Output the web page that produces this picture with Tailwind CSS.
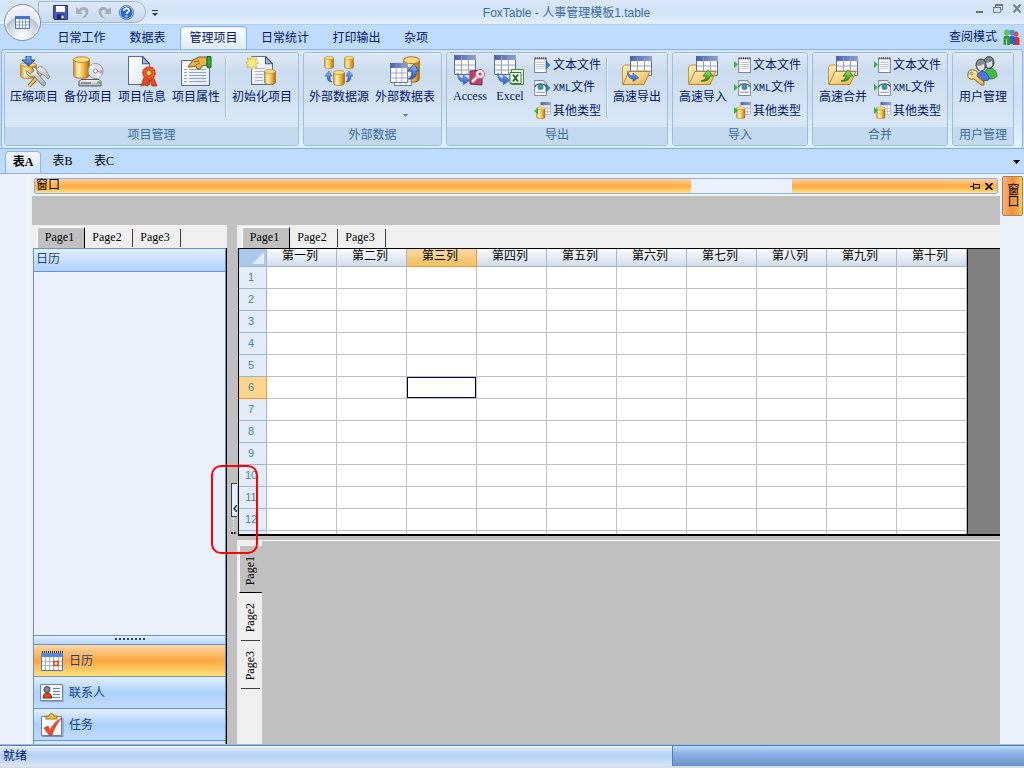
<!DOCTYPE html>
<html lang="zh-CN">
<head>
<meta charset="utf-8">
<meta name="viewport" content="width=device-width, initial-scale=1">
<title>FoxTable - 人事管理模板1.table</title>
<script src="https://cdn.jsdelivr.net/npm/@tailwindcss/browser@4"></script>
</head>
<body class="h-screen overflow-hidden flex flex-col bg-[#bfdbff] text-[12px] leading-[16px] text-[#00156e] font-['Liberation_Serif','Noto_Sans_CJK_SC',sans-serif]">

<svg width="0" height="0" class="absolute" aria-hidden="true">
  <defs>
    <linearGradient id="gold"><stop offset="0" stop-color="#d89a28"/><stop offset=".3" stop-color="#fff4c0"/><stop offset=".6" stop-color="#f4be44"/><stop offset="1" stop-color="#b06c10"/></linearGradient>
    <linearGradient id="blueArrow" x2="0" y2="1"><stop offset="0" stop-color="#8cb8f4"/><stop offset="1" stop-color="#2858c0"/></linearGradient>
    <linearGradient id="greenArrow" x2="0" y2="1"><stop offset="0" stop-color="#a0ec70"/><stop offset="1" stop-color="#209018"/></linearGradient>
    <linearGradient id="folder" x2="1" y2="1"><stop offset="0" stop-color="#fff2c4"/><stop offset="1" stop-color="#f0b040"/></linearGradient>
    <linearGradient id="page" x2="1" y2="1"><stop offset="0" stop-color="#fff"/><stop offset="1" stop-color="#dfe7f6"/></linearGradient>
    <linearGradient id="metal" x2="0" y2="1"><stop offset="0" stop-color="#fafafa"/><stop offset="1" stop-color="#a4aab4"/></linearGradient>
    <linearGradient id="head4" x2="1" y2="0"><stop offset="0" stop-color="#4a63a8"/><stop offset="1" stop-color="#8ea2d4"/></linearGradient>
    <symbol id="cyl" viewBox="0 0 12 16" preserveAspectRatio="none"><path d="M.5 2.500v11c0 1.300 2.500 2 5.500 2s5.500-.7 5.500-2v-11z" fill="url(#gold)" stroke="#a4640e" stroke-width=".6"/><ellipse cx="6" cy="2.500" rx="5.500" ry="2" fill="#fbdc84" stroke="#b87818" stroke-width=".6"/></symbol>
    <symbol id="tbl" viewBox="0 0 22 20" preserveAspectRatio="none"><path d="M.5.5h21v19H.5z" fill="#fff" stroke="#5a6c98"/><path d="M0 0h22v5H0z" fill="url(#head4)"/><path d="M1 10h20M1 15h20M7.500 1v18M14.500 1v18" stroke="#8f9fc4"/></symbol>
    <symbol id="doc" viewBox="0 0 22 28" preserveAspectRatio="none"><path d="M.5.5h14l7 7v20H.5z" fill="url(#page)" stroke="#5c6c90"/><path d="M14.500.5v7h7z" fill="#9fb4dc" stroke="#44557c"/></symbol>
    <symbol id="arrR" viewBox="0 0 14 14"><path d="M1 1c0 4 2 6 6 6V3.500L13.500 9 7 13.500V10.500C2 10.500.5 6 1 1z" fill="url(#blueArrow)" stroke="#2a56b0" stroke-width=".7"/></symbol>

    <symbol id="i-compress" viewBox="0 0 32 32">
      <svg x="2" y="6" width="17" height="17"><use href="#cyl"/></svg>
      <path d="M8 0h5v4h4l-6.500 6L4 4h4z" fill="url(#blueArrow)" stroke="#2451a8"/>
      <path d="M24 16L11 30" stroke="#8a5a10" stroke-width="4"/><path d="M24 16L11 30" stroke="#f2c458" stroke-width="2.500"/>
      <path d="M18 13l5-3 4 3 5 8-2 2-4-4-4-2z" fill="url(#metal)" stroke="#7f8690" stroke-width=".8"/>
      <path d="M8 14l4 4 4-3-2-4c4 0 6 3 5 6l8 9c2 3-1 5-3 3l-8-9c-5 2-8-2-8-6z" fill="url(#metal)" stroke="#767d88" stroke-width=".9"/>
    </symbol>
    <symbol id="i-backup" viewBox="0 0 32 32">
      <svg x="1" y="0" width="17" height="23"><use href="#cyl"/></svg>
      <circle cx="23.500" cy="15" r="7.500" fill="#dde1ea" stroke="#8b92a0"/><path d="M23.500 15l-6-4a7 7 0 0 1 4-3zM23.500 15l6 4a7 7 0 0 1-4 3z" fill="#fff"/><path d="M23.500 15l7-1v4z" fill="#b8a4e0"/><circle cx="23.500" cy="15" r="2" fill="#fff" stroke="#888"/>
      <path d="M9 23.500h18l2 2v4.500H7v-4.500z" fill="url(#metal)" stroke="#555c66"/><path d="M9 27h10" stroke="#555"/><path d="M25 25.500h3v2h-3z" fill="#40c030"/>
    </symbol>
    <symbol id="i-info" viewBox="0 0 32 32">
      <svg x="2" y="0" width="22" height="29"><use href="#doc"/></svg>
      <path d="M18 21l-3 9 4-1 3 1 2-6 2 6 5 0-4-10z" fill="#e8481c" stroke="#a82808" stroke-width=".7"/>
      <circle cx="23" cy="17" r="6.500" fill="#ee5c2c"/><circle cx="23" cy="17" r="6" fill="none" stroke="#d04018" stroke-width="1.500" stroke-dasharray="2 1"/><circle cx="23" cy="17" r="3" fill="#f8c860" stroke="#c84010"/>
    </symbol>
    <symbol id="i-prop" viewBox="0 0 32 32">
      <path d="M1.500 4.500h28v25h-28z" fill="url(#page)" stroke="#5c6c90"/>
      <path d="M4 13.500h3m2 0h17M4 16.500h3m2 0h17M4 19.500h3m2 0h17M4 22.500h3m2 0h17M4 25.500h3m2 0h17" stroke="#94a2c2"/>
      <path d="M8 11l5-7 6-3 8 0v8l-5 1-2 3h-3l-1-3-5 1z" fill="#e4b44c" stroke="#84560c"/><path d="M14 6l5-1m-3 4l4-2" stroke="#84560c" stroke-width=".8"/>
      <path d="M27 .5h4v11h-4z" fill="#30a838" stroke="#146c1c"/>
    </symbol>
    <symbol id="i-init" viewBox="0 0 32 32">
      <svg x="5" y="0" width="22" height="29"><use href="#doc"/></svg>
      <path d="M9 12.500h10M9 15.500h10M9 18.500h9M9 21.500h8M9 24.500h8" stroke="#a8b4d0"/>
      <svg x="18" y="13" width="12" height="16"><use href="#cyl"/></svg>
      <path d="M6 0l1.500 3.500L11 2l-1.500 3.500L13 7l-3.500 1.500L11 12l-3.500-1.500L6 14l-1.500-3.500L1 12l1.500-3.500L-1 7l3.500-1.500L1 2l3.500 1.500z" fill="#ffec80" stroke="#d8a820" stroke-width=".7"/>
    </symbol>
    <symbol id="i-src" viewBox="0 0 32 32">
      <svg x="1" y="0" width="10" height="13"><use href="#cyl"/></svg><svg x="21" y="0" width="10" height="13"><use href="#cyl"/></svg><svg x="10" y="14" width="12" height="16"><use href="#cyl"/></svg>
      <path d="M9 26c-4 0-5-3-5-6H2l4-5 3 5H7c0 3 0 4 2 6zM23 26c4 0 5-3 5-6h2l-4-5-3 5h2c0 3 0 4-2 6z" fill="url(#blueArrow)" stroke="#2c5cb8" stroke-width=".6"/>
    </symbol>
    <symbol id="i-ext" viewBox="0 0 32 32">
      <svg x="14" y="0" width="17" height="27"><use href="#cyl"/></svg>
      <svg x="5" y="11" width="18" height="19"><use href="#tbl"/></svg><svg x="1" y="7" width="18" height="20"><use href="#tbl"/></svg>
      <path d="M19 23c4-2 5-5 4-8h-4l6-7 5 7h-3c1 5-2 9-8 8z" fill="url(#blueArrow)" stroke="#1c4aa8" stroke-width=".8"/>
    </symbol>
    <symbol id="i-access" viewBox="0 0 32 32">
      <svg x="0" y="1" width="22" height="20"><use href="#tbl"/></svg><svg x="3" y="18" width="13" height="13"><use href="#arrR"/></svg>
      <path d="M16 17l12-1v15l-12-1z" fill="#b84870" stroke="#802448"/><circle cx="26" cy="20" r="4.500" fill="#f4e4ec" stroke="#a85070" stroke-width=".8"/><circle cx="26" cy="20" r="1.500" fill="#b84870"/><path d="M23 23l-5 5" stroke="#f4e4ec" stroke-width="2.500"/>
    </symbol>
    <symbol id="i-excel" viewBox="0 0 32 32">
      <svg x="0" y="1" width="22" height="20"><use href="#tbl"/></svg><svg x="3" y="18" width="13" height="13"><use href="#arrR"/></svg>
      <path d="M17.500 15.500h12v15h-12z" fill="#e8f6e4" stroke="#3c8c3c"/><path d="M16 18.500h11v11H16z" fill="#fff" stroke="#2c7c2c"/><path d="M19 20.500l5 7m0-7l-5 7" stroke="#187018" stroke-width="2"/>
    </symbol>
    <symbol id="fold" viewBox="0 0 32 32">
      <path d="M1.500 28V11l2-2h6l2 3h8v16z" fill="url(#folder)" stroke="#c89434"/>
      <svg x="9" y="0" width="22" height="20"><use href="#tbl"/></svg>
      <path d="M2 28.500L8 15.500h21l-6 13z" fill="url(#folder)" stroke="#c08424"/>
    </symbol>
    <symbol id="i-fout" viewBox="0 0 32 32"><use href="#fold"/><svg x="6" y="14" width="12" height="12"><use href="#arrR"/></svg></symbol>
    <symbol id="i-fin" viewBox="0 0 32 32"><use href="#fold"/><path d="M14 25c4-1 5-3 5-5h-3l5-6 5 6h-3c0 3-3 6-9 5z" fill="url(#greenArrow)" stroke="#187818" stroke-width=".8"/></symbol>
    <symbol id="i-user" viewBox="0 0 32 32">
      <path d="M17 21c0-6 3-9 6-9s7 3 7 8c0 2-5 3-7 3z" fill="#48b848" stroke="#187828" stroke-width=".7"/><ellipse cx="22" cy="6.500" rx="5" ry="6" fill="#80848a" stroke="#404448"/><path d="M18 7c3 0 5-1 7-2l0 5-4 2z" fill="#dcdee0"/>
      <path d="M10 24c0-7 3-9 5-9s7 3 7 8c0 2-6 2-7 2z" fill="#4878e0" stroke="#1c3ca0" stroke-width=".7"/><ellipse cx="14" cy="9" rx="5" ry="6" fill="#888c92" stroke="#404448"/><path d="M10 10c3 0 5-1 7-2l0 5-4 2z" fill="#e0e2e4"/>
      <path d="M4 14c5-1 8 3 6 6l7 6v3h-3l-7-6c-4 1-7-1-6-5s1-4 3-4z" fill="url(#folder)" stroke="#8c6408"/><circle cx="4.500" cy="17.500" r="1.500" fill="#9cc0ec" stroke="#8c6408" stroke-width=".5"/>
    </symbol>

    <symbol id="note" viewBox="0 0 12 16"><path d="M.5 2.500h11v13H.5z" fill="#fff" stroke="#7482a0"/><path d="M1 1v2m2-2v2m2-2v2m2-2v2m2-2v2m2-2v2" stroke="#333" stroke-width=".8"/><path d="M2 6h8M2 8h8M2 10h8M2 12h8" stroke="#c0c6d2"/></symbol>
    <symbol id="xml" viewBox="0 0 12 16"><path d="M.5 1.500h8l3 3v11H.5z" fill="#fff" stroke="#7c8cb0"/><circle cx="6" cy="7.500" r="2.800" fill="#3488c8"/><path d="M5 5l2 1-1 3z" fill="#50b850"/><path d="M.5 7.500c2-4 9-4 11 0" fill="none" stroke="#345"/><path d="M2 12.500h8" stroke="#889"/></symbol>
    <symbol id="oth" viewBox="0 0 15 16"><svg x="5" y="0" width="10" height="12"><use href="#tbl"/></svg><svg x="1" y="4" width="9" height="12"><use href="#cyl"/></svg></symbol>
    <symbol id="s-note-out" viewBox="0 0 17 17"><svg x="0" y="0" width="13" height="17"><use href="#note"/></svg><path d="M12 5v8l4-4z" fill="#3c78e0" stroke="#2050b0" stroke-width=".6"/></symbol>
    <symbol id="s-xml-out" viewBox="0 0 17 17"><svg x="0" y="0" width="13" height="17"><use href="#xml"/></svg><path d="M12 5v8l4-4z" fill="#3c78e0" stroke="#2050b0" stroke-width=".6"/></symbol>
    <symbol id="s-oth-out" viewBox="0 0 17 17"><svg x="1" y="0" width="16" height="17"><use href="#oth"/></svg><path d="M4 6v6L0 9z" fill="#30b830"/></symbol>
    <symbol id="s-note-in" viewBox="0 0 17 17"><svg x="4" y="0" width="13" height="17"><use href="#note"/></svg><path d="M0 5v7l4-3.500z" fill="#30b830"/></symbol>
    <symbol id="s-xml-in" viewBox="0 0 17 17"><svg x="4" y="0" width="13" height="17"><use href="#xml"/></svg><path d="M0 5v7l4-3.500z" fill="#30b830"/></symbol>
    <symbol id="s-oth-in" viewBox="0 0 17 17"><svg x="1" y="0" width="16" height="17"><use href="#oth"/></svg><path d="M0 5v7l4-3.500z" fill="#30b830"/></symbol>
  </defs>
</svg>

<!-- Title bar -->
<header class="relative shrink-0 h-[25px] flex items-center bg-linear-to-b from-[#d9e7f9] via-[#d3e4f9] to-[#e3effe] border-b border-[#b0cff7]">
  <div class="ml-[38px] h-[22px] w-[108px] pl-[14px] flex items-center gap-[7px] rounded-r-full border border-[#9db8dc] bg-linear-to-b from-[#dde9f8] to-[#c8daf1]">
    <button aria-label="保存"><svg width="15" height="15" viewBox="0 0 15 15"><path d="M.5.5h14v14H1.500L.5 13z" fill="#4856c0" stroke="#30388c"/><path d="M3 1h9v6H3z" fill="#fff"/><path d="M4 9.500h7v5H4z" fill="#202860"/><path d="M8.500 10.500h2v3h-2z" fill="#fff"/></svg></button>
    <button aria-label="撤销"><svg width="15" height="15" viewBox="0 0 15 15"><path d="M1 2v7h7L5.500 6.500c3-3 6-1 5 2-.4 1.500-1.500 3-4 5 5-1 7-4 7-7 0-5-6-6-9.500-2z" fill="#a4acb8"/></svg></button>
    <button aria-label="重做"><svg width="15" height="15" viewBox="0 0 15 15"><path d="M14 2v7H7l2.500-2.500c-3-3-6-1-5 2 .4 1.500 1.500 3 4 5-5-1-7-4-7-7 0-5 6-6 9.500-2z" fill="#a4acb8"/></svg></button>
    <button aria-label="帮助"><svg width="15" height="15" viewBox="0 0 15 15"><circle cx="7.500" cy="7.500" r="6.500" fill="#2868d8" stroke="#dbe8fa"/><circle cx="7.500" cy="7.500" r="7" fill="none" stroke="#2456b4" stroke-width=".8"/><path d="M5 6c0-3.500 5-3.500 5-.6C10 7 7.500 7 7.500 9" fill="none" stroke="#fff" stroke-width="1.700"/><path d="M6.600 10.300h1.800V12H6.600z" fill="#fff"/></svg></button>
  </div>
  <button aria-label="自定义快速访问工具栏" class="ml-[6px] mt-[3px]"><svg width="6" height="7" viewBox="0 0 6 7"><path d="M0 0h6v1H0zM0 3h6L3 6z" fill="#1c3c7c"/></svg></button>
  <h1 class="flex-1 pt-[2px] text-center font-['Liberation_Sans','Noto_Sans_CJK_SC',sans-serif] text-[#3e6aaa]">FoxTable - 人事管理模板1.table</h1>
  <div class="w-[47px] mb-[7px] mr-[2px] flex items-center justify-between">
    <button aria-label="最小化"><svg width="9" height="9" viewBox="0 0 9 9"><path d="M1 7h7v2H1z" fill="#70757c"/></svg></button>
    <button aria-label="还原"><svg width="10" height="9" viewBox="0 0 10 9"><path d="M2.500 3V1h7v5H8M.5 3.500h7v5h-7z" fill="none" stroke="#7484a0"/><path d="M2 0h8v2H2zM0 3h8v1H0z" fill="#70757c"/></svg></button>
    <button aria-label="关闭"><svg width="10" height="9" viewBox="0 0 10 9"><path d="M1.500.5l7 8m0-8l-7 8" stroke="#76808e" stroke-width="2"/></svg></button>
  </div>
  <button aria-label="应用程序菜单" class="absolute z-10 left-[4px] top-[4px] size-[37px] rounded-full border border-[#7d8ba4] bg-[radial-gradient(circle_at_50%_85%,#ffffff_0%,#d4dae8_35%,#bac3d6_52%,#e8ebf2_56%,#f7f8fb_100%)] flex items-center justify-center shadow-[inset_0_0_0_1px_#fff]">
    <svg width="15" height="13" viewBox="0 0 15 13"><path d="M.5.5h14v12H.5z" fill="#fff" stroke="#5070a8"/><path d="M0 0h15v3H0z" fill="#4474cc"/><path d="M1 6h13M1 9h13M4.500 3v9M7.500 3v9M10.500 3v9" stroke="#88a0cc"/></svg>
  </button>
</header>

<!-- Ribbon tabs -->
<nav class="shrink-0 h-[24px] pl-[46px] pr-[4px] flex items-end">
  <button class="w-[71px] h-[23px]">日常工作</button>
  <button class="w-[61px] h-[23px]">数据表</button>
  <button class="mx-[2px] w-[67px] h-[23px] rounded-t-[4px] border border-b-0 border-[#8db2e3] bg-linear-to-b from-white to-[#dfe9f6] shadow-[inset_0_0_0_1px_#d4f2fc]">管理项目</button>
  <button class="w-[72px] h-[23px]">日常统计</button>
  <button class="w-[71px] h-[23px]">打印输出</button>
  <button class="w-[48px] h-[23px]">杂项</button>
  <button class="ml-auto h-[24px] flex items-center gap-[6px]">查阅模式
    <svg width="17" height="17" viewBox="0 0 17 17"><circle cx="13" cy="5" r="2.500" fill="#e84840"/><path d="M10 16V9q3-3 6.500 0v7z" fill="#d83030"/><circle cx="9" cy="3.500" r="2.800" fill="#4888e8"/><path d="M6 15V8q3-3 6 0v7z" fill="#2c60d0"/><circle cx="4" cy="3.500" r="3" fill="#60c848"/><path d="M.5 16V8q3.500-3 6.500 0v8z" fill="#30a028"/><path d="M3.500 10v6" stroke="#c8f0b8"/></svg>
  </button>
</nav>

<!-- Ribbon -->
<section aria-label="管理项目" class="shrink-0 mx-[1px] px-[2px] pt-[2px] pb-[1px] flex gap-[4px] rounded-[4px] border border-[#8db2e3] border-b-[#c8f2fb] bg-linear-to-b from-[#dbe6f4] via-[#cfdff1] to-[#e0f2fd]">
  <div class="w-[295px] h-[94px] flex flex-col rounded-[3px] overflow-hidden border border-[#9dbfdc]">
    <div class="flex-1 px-[2px] flex bg-linear-to-b from-[#dde8f5] via-[#cbdcef] via-25% to-[#d9e8f7]">
      <button class="w-[54px] pt-[3px] flex flex-col items-center leading-[18px]"><svg width="32" height="32"><use href="#i-compress"/></svg>压缩项目</button>
      <button class="w-[54px] pt-[3px] flex flex-col items-center leading-[18px]"><svg width="32" height="32"><use href="#i-backup"/></svg>备份项目</button>
      <button class="w-[54px] pt-[3px] flex flex-col items-center leading-[18px]"><svg width="32" height="32"><use href="#i-info"/></svg>项目信息</button>
      <button class="w-[54px] pt-[3px] flex flex-col items-center leading-[18px]"><svg width="32" height="32"><use href="#i-prop"/></svg>项目属性</button>
      <span class="mx-[2px] mt-[5px] w-[2px] h-[59px] border-l border-[#9abee4] bg-[#eef6fd]"></span>
      <button class="w-[66px] pt-[3px] flex flex-col items-center leading-[18px]"><svg width="32" height="32"><use href="#i-init"/></svg>初始化项目</button>
    </div>
    <h2 class="h-[18px] leading-[17px] text-center text-[#3e6aaa] bg-[#c2d9f0]">项目管理</h2>
  </div>

  <div class="w-[139px] h-[94px] flex flex-col rounded-[3px] overflow-hidden border border-[#9dbfdc]">
    <div class="flex-1 px-[2px] flex bg-linear-to-b from-[#dde8f5] via-[#cbdcef] via-25% to-[#d9e8f7]">
      <button class="w-[66px] pt-[3px] flex flex-col items-center leading-[18px]"><svg width="32" height="32"><use href="#i-src"/></svg>外部数据源</button>
      <button class="w-[66px] pt-[3px] flex flex-col items-center leading-[18px]"><svg width="32" height="32"><use href="#i-ext"/></svg>外部数据表<svg class="mt-[8px]" width="5" height="3" viewBox="0 0 5 3"><path d="M0 0h5L2.500 3z" fill="#4c78b8"/></svg></button>
    </div>
    <h2 class="h-[18px] leading-[17px] text-center text-[#3e6aaa] bg-[#c2d9f0]">外部数据</h2>
  </div>

  <div class="w-[222px] h-[94px] flex flex-col rounded-[3px] overflow-hidden border border-[#9dbfdc]">
    <div class="flex-1 px-[3px] flex bg-linear-to-b from-[#dde8f5] via-[#cbdcef] via-25% to-[#d9e8f7]">
      <button class="w-[40px] pt-[1px] flex flex-col items-center leading-[20px]"><svg width="32" height="32"><use href="#i-access"/></svg>Access</button>
      <button class="w-[40px] pt-[1px] flex flex-col items-center leading-[20px]"><svg width="32" height="32"><use href="#i-excel"/></svg>Excel</button>
      <div class="pl-[4px] w-[74px]">
        <button class="h-[23px] flex items-center gap-[2px] whitespace-nowrap"><svg width="17" height="17"><use href="#s-note-out"/></svg>文本文件</button>
        <button class="h-[23px] flex items-center gap-[2px] whitespace-nowrap"><svg width="17" height="17"><use href="#s-xml-out"/></svg><span><span class="font-['Liberation_Mono',monospace] text-[10px]">XML</span>文件</span></button>
        <button class="h-[23px] flex items-center gap-[2px] whitespace-nowrap"><svg width="17" height="17"><use href="#s-oth-out"/></svg>其他类型</button>
      </div>
      <span class="mx-[2px] mt-[5px] w-[2px] h-[59px] border-l border-[#9abee4] bg-[#eef6fd]"></span>
      <button class="w-[54px] pt-[3px] flex flex-col items-center leading-[18px]"><svg width="32" height="32"><use href="#i-fout"/></svg>高速导出</button>
    </div>
    <h2 class="h-[18px] leading-[17px] text-center text-[#3e6aaa] bg-[#c2d9f0]">导出</h2>
  </div>

  <div class="w-[136px] h-[94px] flex flex-col rounded-[3px] overflow-hidden border border-[#9dbfdc]">
    <div class="flex-1 px-[3px] flex bg-linear-to-b from-[#dde8f5] via-[#cbdcef] via-25% to-[#d9e8f7]">
      <button class="w-[54px] pt-[3px] flex flex-col items-center leading-[18px]"><svg width="32" height="32"><use href="#i-fin"/></svg>高速导入</button>
      <div class="pl-[4px]">
        <button class="h-[23px] flex items-center gap-[2px] whitespace-nowrap"><svg width="17" height="17"><use href="#s-note-in"/></svg>文本文件</button>
        <button class="h-[23px] flex items-center gap-[2px] whitespace-nowrap"><svg width="17" height="17"><use href="#s-xml-in"/></svg><span><span class="font-['Liberation_Mono',monospace] text-[10px]">XML</span>文件</span></button>
        <button class="h-[23px] flex items-center gap-[2px] whitespace-nowrap"><svg width="17" height="17"><use href="#s-oth-in"/></svg>其他类型</button>
      </div>
    </div>
    <h2 class="h-[18px] leading-[17px] text-center text-[#3e6aaa] bg-[#c2d9f0]">导入</h2>
  </div>

  <div class="w-[136px] h-[94px] flex flex-col rounded-[3px] overflow-hidden border border-[#9dbfdc]">
    <div class="flex-1 px-[3px] flex bg-linear-to-b from-[#dde8f5] via-[#cbdcef] via-25% to-[#d9e8f7]">
      <button class="w-[54px] pt-[3px] flex flex-col items-center leading-[18px]"><svg width="32" height="32"><use href="#i-fin"/></svg>高速合并</button>
      <div class="pl-[4px]">
        <button class="h-[23px] flex items-center gap-[2px] whitespace-nowrap"><svg width="17" height="17"><use href="#s-note-in"/></svg>文本文件</button>
        <button class="h-[23px] flex items-center gap-[2px] whitespace-nowrap"><svg width="17" height="17"><use href="#s-xml-in"/></svg><span><span class="font-['Liberation_Mono',monospace] text-[10px]">XML</span>文件</span></button>
        <button class="h-[23px] flex items-center gap-[2px] whitespace-nowrap"><svg width="17" height="17"><use href="#s-oth-in"/></svg>其他类型</button>
      </div>
    </div>
    <h2 class="h-[18px] leading-[17px] text-center text-[#3e6aaa] bg-[#c2d9f0]">合并</h2>
  </div>

  <div class="w-[62px] h-[94px] flex flex-col rounded-[3px] overflow-hidden border border-[#9dbfdc]">
    <div class="flex-1 flex justify-center bg-linear-to-b from-[#dde8f5] via-[#cbdcef] via-25% to-[#d9e8f7]">
      <button class="pt-[3px] flex flex-col items-center leading-[18px]"><svg width="32" height="32"><use href="#i-user"/></svg>用户管理</button>
    </div>
    <h2 class="h-[18px] leading-[17px] text-center text-[#3e6aaa] bg-[#c2d9f0]">用户管理</h2>
  </div>
</section>

<!-- Table tabs -->
<nav class="shrink-0 h-[26px] pl-[5px] pr-[4px] flex items-end text-black border-t border-t-[#8fabce] border-b border-b-[#8db2e3] bg-[#bfdbff]">
  <button class="w-[36px] h-[22px] pb-[2px] font-bold rounded-t-[4px] border border-b-0 border-[#8db2e3] bg-linear-to-b from-[#f4f8fd] to-[#d4e2f4]">表A</button>
  <button class="w-[43px] h-[22px] pb-[2px]">表B</button>
  <button class="w-[40px] h-[22px] pb-[2px]">表C</button>
  <button aria-label="表列表" class="ml-auto mb-[9px]"><svg width="7" height="4" viewBox="0 0 7 4"><path d="M0 0h7L3.500 4z" fill="#000"/></svg></button>
</nav>

<main class="flex-1 min-h-0 flex bg-[#eaf1fb]">
  <div class="w-[29px] shrink-0 border-r border-white"></div>

  <section class="ml-[3px] flex-1 min-w-0 flex flex-col">
    <div class="mt-[4px] mx-[2px] h-[16px] shrink-0 flex rounded-[2px] border border-[#8db2e3] text-black leading-[13px]">
      <h2 class="grow-[658] basis-0 pl-[1px] bg-linear-to-b from-[#ffd09c] via-[#ffab3f] to-[#ffe17a]">窗口</h2>
      <div class="grow-[102] basis-0"></div>
      <div class="grow-[202] basis-0 pr-[4px] flex items-center justify-end gap-[5px] bg-linear-to-b from-[#ffd09c] via-[#ffab3f] to-[#ffe17a]">
        <button aria-label="自动隐藏"><svg width="10" height="7" viewBox="0 0 10 7"><path d="M0 3.500h3M3.500 0v7M3.500 1.500h6v4M3 5h7" fill="none" stroke="#000"/></svg></button>
        <button aria-label="关闭窗口"><svg width="8" height="7" viewBox="0 0 8 7"><path d="M.5 0l7 7m0-7l-7 7" stroke="#000" stroke-width="1.600"/></svg></button>
      </div>
    </div>
    <div class="mt-[2px] h-[29px] shrink-0 bg-[#c0c0c0]"></div>

    <div class="flex-1 min-h-0 flex bg-[#c0c0c0]">
      <!-- Navigation pane -->
      <aside class="w-[195px] shrink-0 flex flex-col bg-[#efefef]">
        <div class="h-[23px] shrink-0 pl-[5px] pt-[2px] flex items-start text-black">
          <button class="w-[48px] h-[21px] pr-[3px] pb-[2px] bg-[#c0c0c0] border-t border-l border-white border-r border-r-black">Page1</button>
          <button class="w-[48px] h-[18px] mt-[2px] pr-[3px] pb-[2px] border-r border-[#404040]">Page2</button>
          <button class="w-[48px] h-[18px] mt-[2px] pr-[3px] pb-[2px] border-r border-[#404040]">Page3</button>
        </div>
        <div class="flex-1 ml-[1px] flex flex-col border-r border-black">
          <div class="flex-1 flex flex-col border border-b-0 border-[#6593cf] bg-[#eaf1fb] text-[#15428b]">
            <h3 class="h-[23px] pl-[2px] leading-[20px] border-b border-[#6593cf] bg-linear-to-b from-[#e3efff] to-[#afd2ff]">日历</h3>
            <div class="flex-1"></div>
            <div class="h-[9px] pt-[2px] flex justify-center gap-[2px] border-t border-[#6593cf] bg-linear-to-b from-[#e3efff] to-[#b3d4ff]">
              <i class="size-[2px] bg-[#283e6c]"></i><i class="size-[2px] bg-[#283e6c]"></i><i class="size-[2px] bg-[#283e6c]"></i><i class="size-[2px] bg-[#283e6c]"></i><i class="size-[2px] bg-[#283e6c]"></i><i class="size-[2px] bg-[#283e6c]"></i><i class="size-[2px] bg-[#283e6c]"></i><i class="size-[2px] bg-[#283e6c]"></i>
            </div>
            <button class="h-[32px] pl-[6px] flex items-center gap-[5px] border-t border-[#6593cf] bg-linear-to-b from-[#ffd6a2] via-[#ffa73c] to-[#ffe17a]">
              <svg width="24" height="22" viewBox="0 0 24 22"><path d="M1.500 3.500h21v17h-21z" fill="#fff" stroke="#5474ac"/><path d="M1 3h22v4H1z" fill="#5488e0"/><path d="M2 2h21" stroke="#333" stroke-width="2" stroke-dasharray="1 1"/><path d="M2 11.500h20M2 15.500h20M5.500 7v13M9.500 7v13M13.500 7v13M18.500 7v13" stroke="#a4b4d0"/><path d="M14 11.500h4v4h-4z" fill="#fff" stroke="#e04010" stroke-width="1.500"/></svg>日历</button>
            <button class="h-[32px] pl-[6px] flex items-center gap-[5px] border-t border-[#6593cf] bg-linear-to-b from-[#e3efff] via-[#add1ff] to-[#c0dbff]">
              <svg width="24" height="18" viewBox="0 0 24 18"><path d="M.5.5h22v16H.5z" fill="#f8faff" stroke="#7084ac"/><path d="M1 17.500h23V2" fill="none" stroke="#8ea4c8"/><circle cx="7" cy="5.500" r="3" fill="#888c90" stroke="#3c3c40"/><path d="M3 14c0-7 8-7 9 0z" fill="#d84c1c" stroke="#802808"/><path d="M13 4.500h7M13 7.500h7M13 10.500h7M13 13.500h7" stroke="#5c84c4"/></svg>联系人</button>
            <button class="h-[32px] pl-[6px] flex items-center gap-[5px] border-t border-[#6593cf] bg-linear-to-b from-[#e3efff] via-[#add1ff] to-[#c0dbff]">
              <svg width="24" height="24" viewBox="0 0 24 24"><path d="M1.500 3.500h20v19h-20z" fill="#fff" stroke="#6c7c9c"/><path d="M2 23.500h21V5" fill="none" stroke="#8090b0"/><path d="M6 6V3h3c0-3 5-3 5 0h3v3z" fill="#f0c040" stroke="#a87408"/><path d="M4 15l4-2 2 4C13 11 17 7 22 5c-4 4-8 10-10 17H9z" fill="#f04c2c" stroke="#b82c10" stroke-width=".6"/></svg>任务</button>
            <div class="h-[4px] border-t border-[#6593cf] bg-[#d6e8ff]"></div>
          </div>
        </div>
      </aside>

      <!-- Splitter, its collapse handle and the callout around it -->
      <div class="relative w-[10px] shrink-0">
        <button aria-label="折叠" class="absolute left-[4px] top-[258px] w-[6px] h-[34px] flex items-center justify-end bg-[#e4eefa] border-t border-l border-[#404040] border-b"><svg class="mt-[16px]" width="4" height="7" viewBox="0 0 4 7"><path d="M4 0L1 3.500 4 7" fill="none" stroke="#103c60" stroke-width="1.500"/></svg></button>
        <div class="absolute left-[4px] top-[292px] w-[5px] h-[17px] border-b-2 border-dotted border-[#202020]"></div>
        <div class="absolute left-[6px] top-[293px] h-[14px] border-l border-dotted border-white"></div>
        <div class="absolute z-10 -left-[16px] top-[240px] w-[47px] h-[89px] rounded-[10px] border-2 border-[#ff0000] pointer-events-none"></div>
      </div>

      <div class="flex-1 min-w-0 flex flex-col">
        <div class="h-[23px] shrink-0 pl-[5px] pt-[2px] flex items-start text-black bg-[#efefef]">
          <button class="w-[48px] h-[21px] pr-[3px] pb-[2px] bg-[#c0c0c0] border-t border-l border-white border-r border-r-black">Page1</button>
          <button class="w-[48px] h-[18px] mt-[2px] pr-[3px] pb-[2px] border-r border-[#404040]">Page2</button>
          <button class="w-[48px] h-[18px] mt-[2px] pr-[3px] pb-[2px] border-r border-[#404040]">Page3</button>
        </div>
        <div class="ml-[1px] h-[288px] shrink-0 overflow-hidden border-t border-l border-b-2 border-black bg-[#808080]">
          <table class="table-fixed w-[729px] border-separate border-spacing-0 bg-white border-r border-black text-black">
            <thead><tr id="head" class="h-[18px]"><th class="w-[28px] p-0 bg-[#aac7ec] border-r border-b border-[#9eb6ce]" aria-label="全选"><svg class="ml-auto mr-[2px]" width="12" height="12" viewBox="0 0 12 12"><path d="M12 0v12H0z" fill="#e4ecf7"/></svg></th></tr></thead>
            <tbody id="rows"></tbody>
          </table>
        </div>
        <div class="flex-1 flex">
          <div class="w-[25px] mt-[4px] pl-[2px] pt-[5px] flex flex-col items-start text-black bg-[#efefef]">
            <button class="w-[23px] h-[48px] pt-[3px] pr-[2px] flex items-center justify-center bg-[#c0c0c0] border-t border-l border-white border-b border-b-black"><span class="[writing-mode:vertical-rl] rotate-180">Page1</span></button>
            <button class="ml-[2px] w-[19px] h-[48px] pt-[3px] pr-[2px] flex items-center justify-center border-b border-[#404040]"><span class="[writing-mode:vertical-rl] rotate-180">Page2</span></button>
            <button class="ml-[2px] w-[19px] h-[48px] pt-[3px] pr-[2px] flex items-center justify-center border-b border-[#404040]"><span class="[writing-mode:vertical-rl] rotate-180">Page3</span></button>
          </div>
          <div class="flex-1 mt-[4px] border-t border-white"></div>
        </div>
      </div>
    </div>
  </section>

  <div class="w-[24px] shrink-0 pl-[2px] pt-[2px]">
    <button class="w-[21px] h-[40px] pl-[2px] flex flex-col items-center justify-center leading-[12px] text-black rounded-[2px] border border-[#a08454] bg-linear-to-r from-[#f8b478] via-[#ee8e38] to-[#fcc660]"><span>窗</span><span>口</span></button>
  </div>
</main>

<!-- Status bar -->
<footer class="shrink-0 h-[24px] flex flex-col border-t border-t-[#9cbce4] border-b-2 border-b-[#d8dde4]">
  <div class="flex-1 flex border-t border-[#567db0]">
    <p class="grow-[672] basis-0 pl-[3px] leading-[18px] border-t border-white bg-linear-to-b from-[#dbe9fc] via-[#b4d1f6] via-45% to-[#d8e6f9]">就绪</p>
    <div class="grow-[352] basis-0 border-l border-[#567db0] bg-linear-to-b from-[#c0daf8] via-[#88b0e6] via-40% to-[#6f92c4]"></div>
  </div>
</footer>

<script>
  const names = ["一", "二", "三", "四", "五", "六", "七", "八", "九", "十"];
  const plainHead = "w-[70px] p-0 pr-[3px] pb-[3px] font-normal leading-[14px] border-r border-b border-[#9eb6ce] bg-linear-to-b from-[#f9fcfd] to-[#d3dbe9]";
  const activeHead = "w-[70px] p-0 pr-[3px] pb-[3px] font-normal leading-[14px] border-r border-b border-[#f29536] bg-linear-to-b from-[#f9d99f] to-[#f1c15f]";
  const plainRow = "p-0 pr-[3px] pb-[2px] font-normal text-[11px] font-['Liberation_Sans',sans-serif] text-[#4682b4] border-r border-b border-[#9eb6ce] bg-[#e4ecf7]";
  const activeRow = "p-0 pr-[3px] pb-[2px] font-normal text-[11px] font-['Liberation_Sans',sans-serif] text-[#4682b4] border-r border-b border-[#f29536] bg-[#ffd58d]";
  document.getElementById("head").insertAdjacentHTML("beforeend",
    names.map((n, i) => `<th scope="col" class="${i === 2 ? activeHead : plainHead}">第${n}列</th>`).join(""));
  let html = "";
  for (let r = 1; r <= 13; r++) {
    html += `<tr class="h-[22px]"><th scope="row" class="${r === 6 ? activeRow : plainRow}">${r <= 12 ? r : ""}</th>`;
    for (let c = 0; c < 10; c++) {
      html += `<td class="p-0 border-r border-b border-[#c0c0c0]">${r === 6 && c === 2 ? '<div class="h-[21px] border border-[#00005c]"></div>' : ""}</td>`;
    }
    html += "</tr>";
  }
  document.getElementById("rows").innerHTML = html;
</script>
</body>
</html>
